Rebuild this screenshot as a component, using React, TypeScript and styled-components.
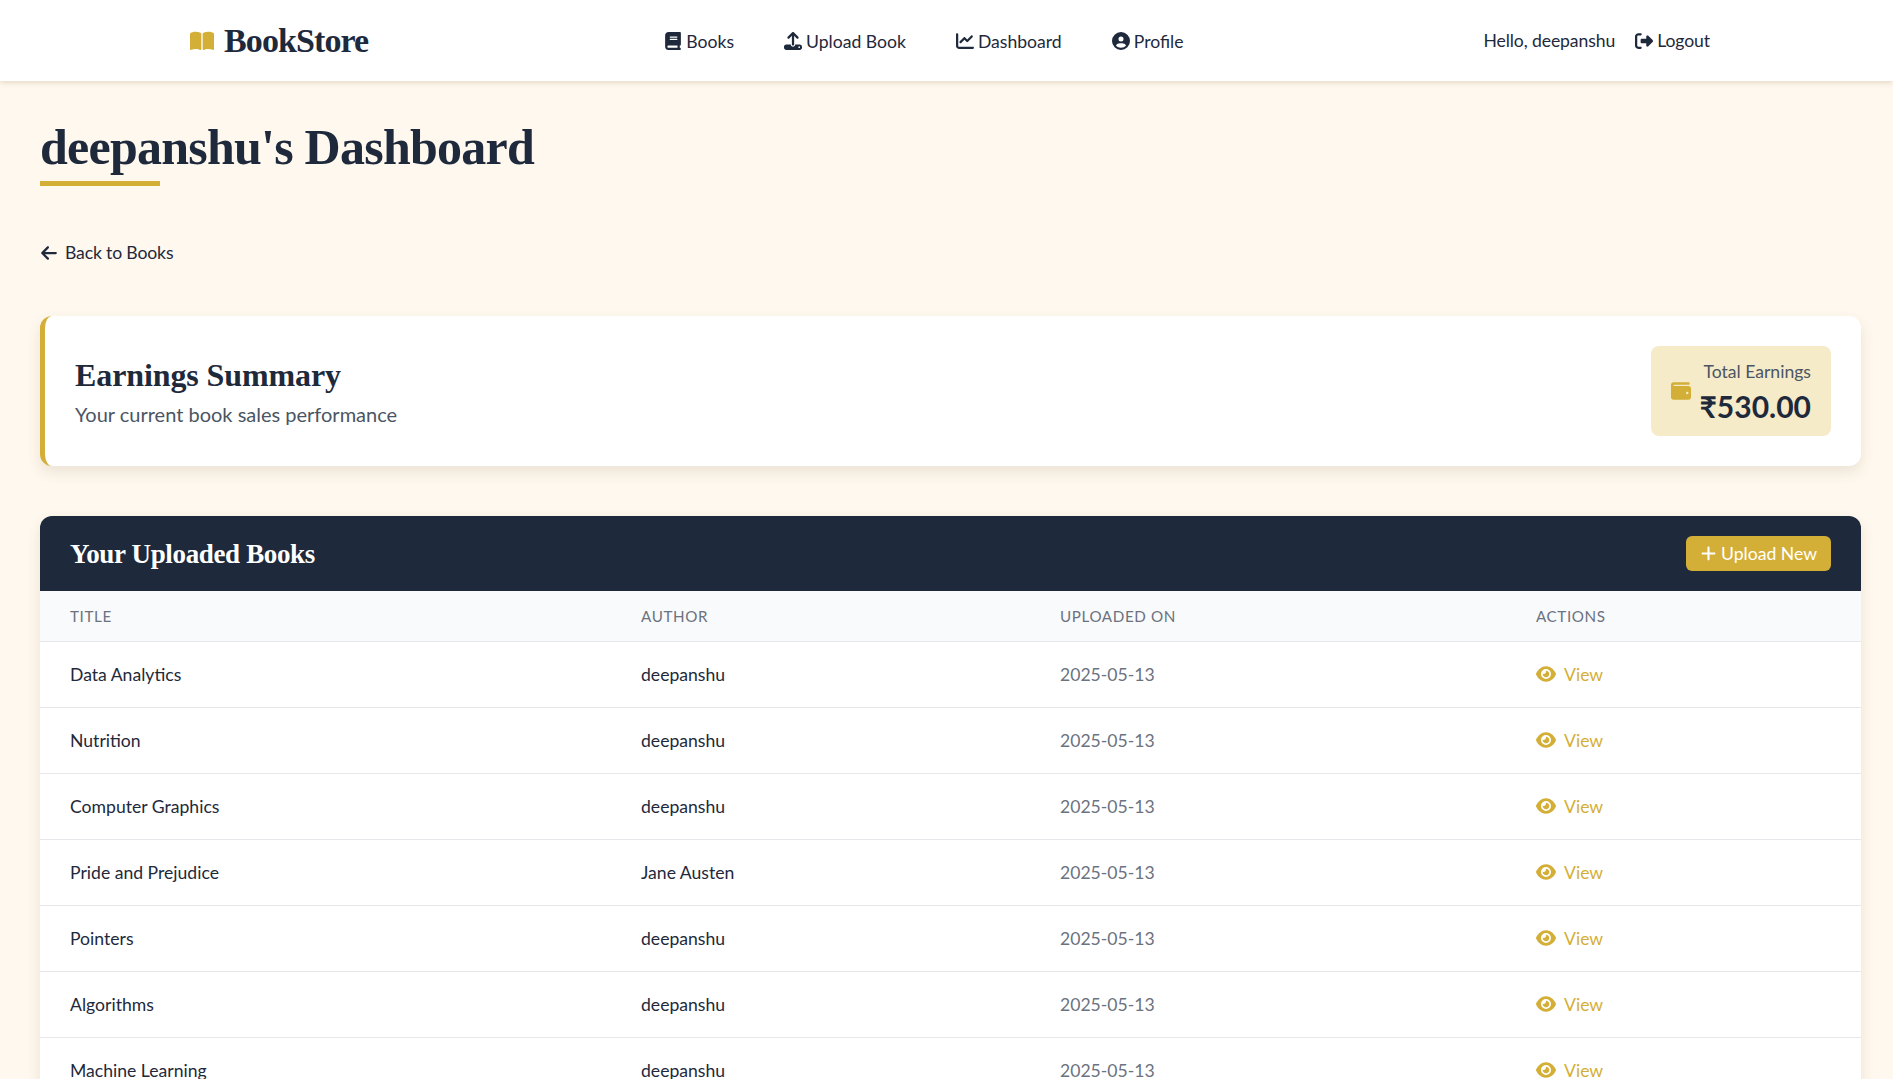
import React from 'react';
import styled, { createGlobalStyle } from 'styled-components';
import {
  FaArrowLeft,
  FaBook,
  FaBookOpen,
  FaChartLine,
  FaCircleUser,
  FaEye,
  FaPlus,
  FaRightFromBracket,
  FaUpload,
  FaWallet,
} from 'react-icons/fa6';

const navy = '#1e293b';
const gold = '#d4af37';
const serif = '"Liberation Serif", "Times New Roman", serif';

const GlobalStyle = createGlobalStyle`
  html, body {
    margin: 0;
    height: 100%;
    overflow: hidden;
  }
  body {
    background: #fff8ee;
    color: ${navy};
    font-family: Lato, "Open Sans", sans-serif;
    font-size: 16px;
  }
  * { box-sizing: border-box; }
`;

const Header = styled.header`
  height: 81px;
  background: #fff;
  box-shadow: 0 1px 6px rgba(120, 100, 50, 0.25);
`;

const HeaderInner = styled.div`
  width: 1520px;
  height: 100%;
  margin-left: 190px;
  display: flex;
  justify-content: space-between;
  align-items: center;
`;

const Logo = styled.div`
  display: flex;
  align-items: center;
  gap: 10px;
  font-family: ${serif};
  font-weight: 700;
  font-size: 34px;
  letter-spacing: -0.9px;
  svg { color: ${gold}; font-size: 24px; }
`;

const Nav = styled.nav`
  display: flex;
  gap: 50px;
  padding: 1px 4px 0 0;
`;

const NavItem = styled.a`
  display: flex;
  align-items: center;
  gap: 4px;
  font-size: 17.6px;
  svg { font-size: 18px; }
`;

const UserArea = styled.div`
  display: flex;
  align-items: center;
  gap: 20px;
  font-size: 17.6px;
  letter-spacing: -0.1px;
`;

const Main = styled.main`
  padding: 32px 32px 0 40px;
`;

const Title = styled.h1`
  margin: 0;
  padding: 3px 0;
  font-family: ${serif};
  font-weight: 700;
  font-size: 50px;
  line-height: 62px;
  letter-spacing: -0.76px;
  position: relative;
  &::after {
    content: '';
    position: absolute;
    left: 0;
    bottom: -5px;
    width: 120px;
    height: 5px;
    background: ${gold};
  }
`;

const BackLink = styled.a`
  display: flex;
  align-items: center;
  gap: 7px;
  margin-top: 61px;
  font-size: 17.6px;
  letter-spacing: -0.15px;
  svg { font-size: 18px; }
`;

const SummaryCard = styled.section`
  margin-top: 53px;
  height: 150px;
  display: flex;
  justify-content: space-between;
  align-items: center;
  padding: 0 30px;
  background: #fff;
  border-left: 5px solid ${gold};
  border-radius: 12px;
  box-shadow: 0 6px 14px rgba(90, 70, 30, 0.12);
`;

const SummaryInfo = styled.div`
  padding-bottom: 2px;
`;

const SummaryTitle = styled.h2`
  margin: 0 0 7px;
  font-family: ${serif};
  font-weight: 700;
  font-size: 32px;
  line-height: 40px;
  letter-spacing: -0.1px;
`;

const SummaryText = styled.p`
  margin: 0;
  font-size: 20px;
  color: #4b5563;
`;

const EarningsBox = styled.div`
  width: 180px;
  height: 90px;
  display: flex;
  align-items: center;
  justify-content: space-between;
  padding: 0 20px;
  background: #f5ebc9;
  border-radius: 8px;
  > svg { color: ${gold}; font-size: 20px; }
`;

const EarningsText = styled.div`
  padding-top: 2px;
  text-align: right;
`;

const EarningsLabel = styled.div`
  font-size: 17.6px;
  color: #4b5563;
  line-height: 26px;
  margin-bottom: 1px;
`;

const EarningsValue = styled.div`
  font-size: 30px;
  font-weight: 700;
  line-height: 40px;
`;

const BooksCard = styled.section`
  margin-top: 50px;
  background: #fff;
  border-radius: 12px 12px 0 0;
  box-shadow: 0 6px 14px rgba(90, 70, 30, 0.12);
  overflow: hidden;
`;

const BooksHeader = styled.div`
  height: 75px;
  display: flex;
  align-items: center;
  justify-content: space-between;
  padding: 0 30px;
  background: ${navy};
`;

const BooksTitle = styled.h2`
  margin: 0;
  padding-top: 2px;
  color: #fff;
  font-family: ${serif};
  font-weight: 700;
  font-size: 27px;
  letter-spacing: -0.35px;
`;

const UploadButton = styled.button`
  height: 35px;
  width: 145px;
  display: flex;
  align-items: center;
  justify-content: center;
  gap: 4px;
  padding: 0;
  border: none;
  border-radius: 6px;
  background: ${gold};
  color: #fff;
  font-family: inherit;
  font-size: 17.6px;
  svg { font-size: 17px; }
`;

const Table = styled.table`
  width: 100%;
  table-layout: fixed;
  border-collapse: collapse;
`;

const HeadCell = styled.th<{ $width: number }>`
  width: ${p => p.$width}px;
  height: 50px;
  padding: 0 30px;
  background: #f9fafb;
  border-bottom: 1px solid #e5e7eb;
  text-align: left;
  font-size: 15.2px;
  font-weight: 400;
  letter-spacing: 0.6px;
  color: #6b7280;
`;

const Cell = styled.td<{ $muted?: boolean }>`
  height: 66px;
  padding: 0 30px;
  border-bottom: 1px solid #e5e7eb;
  font-size: 17.6px;
  color: ${p => (p.$muted ? '#6b7280' : navy)};
`;

const ViewLink = styled.a`
  display: inline-flex;
  align-items: center;
  vertical-align: middle;
  margin-bottom: 1px;
  gap: 8px;
  color: ${gold};
  svg { font-size: 20px; }
`;

const books = [
  { title: 'Data Analytics', author: 'deepanshu' },
  { title: 'Nutrition', author: 'deepanshu' },
  { title: 'Computer Graphics', author: 'deepanshu' },
  { title: 'Pride and Prejudice', author: 'Jane Austen' },
  { title: 'Pointers', author: 'deepanshu' },
  { title: 'Algorithms', author: 'deepanshu' },
  { title: 'Machine Learning', author: 'deepanshu' },
];

export default function App() {
  return (
    <>
      <GlobalStyle />
      <Header>
        <HeaderInner>
          <Logo><FaBookOpen />BookStore</Logo>
          <Nav>
            <NavItem><FaBook />Books</NavItem>
            <NavItem><FaUpload />Upload Book</NavItem>
            <NavItem><FaChartLine />Dashboard</NavItem>
            <NavItem><FaCircleUser />Profile</NavItem>
          </Nav>
          <UserArea>
            <span>Hello, deepanshu</span>
            <NavItem><FaRightFromBracket />Logout</NavItem>
          </UserArea>
        </HeaderInner>
      </Header>
      <Main>
        <Title>deepanshu's Dashboard</Title>
        <BackLink><FaArrowLeft />Back to Books</BackLink>
        <SummaryCard>
          <SummaryInfo>
            <SummaryTitle>Earnings Summary</SummaryTitle>
            <SummaryText>Your current book sales performance</SummaryText>
          </SummaryInfo>
          <EarningsBox>
            <FaWallet />
            <EarningsText>
              <EarningsLabel>Total Earnings</EarningsLabel>
              <EarningsValue>₹530.00</EarningsValue>
            </EarningsText>
          </EarningsBox>
        </SummaryCard>
        <BooksCard>
          <BooksHeader>
            <BooksTitle>Your Uploaded Books</BooksTitle>
            <UploadButton><FaPlus />Upload New</UploadButton>
          </BooksHeader>
          <Table>
            <thead>
              <tr>
                <HeadCell $width={571}>TITLE</HeadCell>
                <HeadCell $width={419}>AUTHOR</HeadCell>
                <HeadCell $width={476}>UPLOADED ON</HeadCell>
                <HeadCell $width={355}>ACTIONS</HeadCell>
              </tr>
            </thead>
            <tbody>
              {books.map(book => (
                <tr key={book.title}>
                  <Cell>{book.title}</Cell>
                  <Cell>{book.author}</Cell>
                  <Cell $muted>2025-05-13</Cell>
                  <Cell><ViewLink><FaEye />View</ViewLink></Cell>
                </tr>
              ))}
            </tbody>
          </Table>
        </BooksCard>
      </Main>
    </>
  );
}
